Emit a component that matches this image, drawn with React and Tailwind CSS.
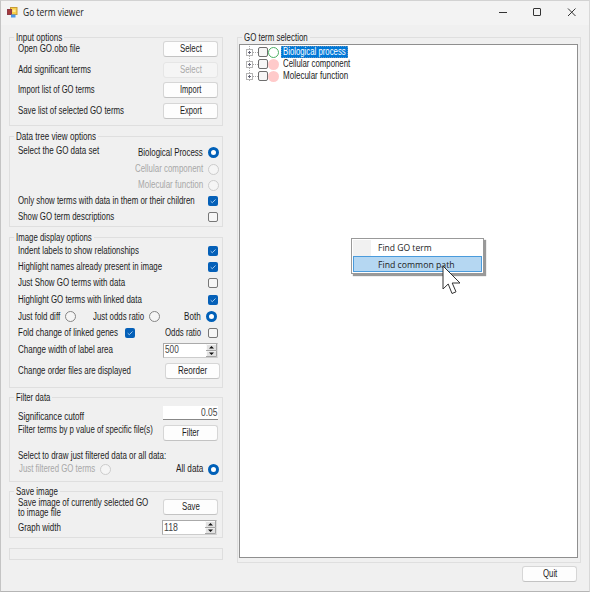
import { useLayoutEffect, useRef } from "react";

// Single-line caption condensed horizontally so that it fills the given width.
function Text({ w, className = "", children }) {
  const box = useRef(null);
  const ink = useRef(null);
  useLayoutEffect(() => {
    box.current.style.width = `${w}px`;
    ink.current.style.transform = `scaleX(${w / ink.current.offsetWidth})`;
  }, [w]);
  return (
    <span ref={box} className={`flex shrink-0 ${className}`}>
      <span ref={ink} className="shrink-0 origin-left whitespace-pre">
        {children}
      </span>
    </span>
  );
}

function Group({ title, w, className, children }) {
  return (
    <section className={`relative flex flex-col border border-[#dfdfdf] ${className}`}>
      <h2 className="absolute -top-[6px] left-[4px] flex h-[11px] items-center bg-[#f0f0f0] px-[2px] leading-none">
        <Text w={w}>{title}</Text>
      </h2>
      {children}
    </section>
  );
}

function Row({ className, children }) {
  return <div className={`flex shrink-0 items-center justify-between pl-[8px] ${className}`}>{children}</div>;
}

function Button({ w, disabled, className = "", children }) {
  return (
    <button
      className={`flex h-[16px] w-[55px] shrink-0 items-center justify-center rounded-[3px] border ${
        disabled ? "border-[#e6e6e6] bg-[#f5f5f5] text-[#a9a9a9]" : "border-[#d6d6d6] border-b-[#c3c3c3] bg-[#fdfdfd]"
      } ${className}`}
    >
      <Text w={w}>{children}</Text>
    </button>
  );
}

function Radio({ checked, disabled }) {
  if (checked) return <i className="size-[11px] shrink-0 rounded-full border-[3px] border-[#0060b8] bg-white" />;
  return (
    <i className={`size-[11px] shrink-0 rounded-full border bg-[#f5f5f5] ${disabled ? "border-[#cccccc]" : "border-[#858585]"}`} />
  );
}

function Check({ checked }) {
  if (!checked) return <i className="size-[10px] shrink-0 rounded-[2px] border border-[#777] bg-[#f6f6f6]" />;
  return (
    <i className="flex size-[10px] shrink-0 items-center justify-center rounded-[2px] bg-[#0560b8]">
      <svg viewBox="0 0 10 10" className="size-[10px]" fill="none" stroke="#b5d5f2" strokeWidth="0.9">
        <path d="M2.7 5.2 4.3 6.7 7.5 3.5" />
      </svg>
    </i>
  );
}

function Spinner({ value }) {
  return (
    <div className="flex h-[15px] w-[55px] shrink-0 border border-[#aaa] border-r-[#ddd] border-b-[#ccc] bg-white">
      <span className="flex flex-1 items-center pl-px text-[#444]">
        <Text w={14}>{value}</Text>
      </span>
      <span className="flex w-[11px] flex-col bg-[#e2e2e2]">
        <svg viewBox="0 0 11 13" className="h-[13px] w-[11px]">
          <path d="M.5 6V.5H10M.5 12.5V7H10" stroke="#fafafa" fill="none" />
          <path d="M0 6.5H10.5V0M0 12.5H10.5V7" stroke="#a5a5a5" fill="none" />
          <path d="M3 4.5 5.5 2 8 4.5ZM3 8.5 5.5 11 8 8.5Z" fill="#111" />
        </svg>
      </span>
    </div>
  );
}

function Node({ selected, w, children }) {
  return (
    <li className="flex h-[12px] items-center">
      <svg viewBox="0 0 12 12" className="h-[12px] w-[12px] shrink-0">
        <path d="M3.5 0V12M7 6.5H12" stroke="#aaa" strokeDasharray="1 1" />
        <rect x=".5" y="3.5" width="6" height="6" fill="#fff" stroke="#b5b5b5" />
        <path d="M2 6.5H5M3.5 5V8" stroke="#667" />
      </svg>
      <i className="size-[10px] shrink-0 rounded-[2px] border border-[#6e6e6e] bg-[#f6f6f6]" />
      <i className={`size-[11px] shrink-0 rounded-full ${selected ? "border border-[#4caf63] bg-white" : "bg-[#ffcaca]"}`} />
      <span
        className={`ml-[2px] flex h-[12px] items-center pl-[2px] ${
          selected ? "w-[67px] bg-[#0078d7] text-white outline-1 -outline-offset-1 outline-dotted outline-[#5f93c0]" : ""
        }`}
      >
        <Text w={w}>{children}</Text>
      </span>
    </li>
  );
}

function TitleBar() {
  return (
    <header className="flex h-[24px] shrink-0 items-center bg-[#f3f3f3]">
      <svg viewBox="0 0 11 11" className="-mt-[2px] ml-[6px] h-[11px] w-[11px]">
        <rect x="3.5" y=".5" width="6.5" height="7" fill="#f8cf4a" stroke="#c79c35" />
        <rect x=".5" y="2.5" width="4" height="5" fill="#a33a3a" stroke="#8e3a48" />
        <rect x="4" y="7.500" width="4.500" height="3" fill="#4b95e6" />
        <path d="M5.500 2.500H8.500V5H5.500Z" fill="#ffe899" />
      </svg>
      <h1 className="-mt-[2px] ml-[5px] flex font-['Open_Sans','Noto_Sans',sans-serif] text-[10px] leading-none text-[#222]">
        <Text w={61}>Go term viewer</Text>
      </h1>
      <svg viewBox="0 0 80 12" className="-mt-[2px] ml-auto mr-[12px] h-[12px] w-[80px]" fill="none" stroke="#333">
        <path d="M2 6.500H10" />
        <rect x="36.500" y="2.500" width="7" height="7" rx=".5" />
        <path d="M71 2.500 78.500 10M78.500 2.500 71 10" />
      </svg>
    </header>
  );
}

export default function App() {
  return (
    <div className="relative flex h-[592px] w-[590px] flex-col overflow-hidden border border-t-[#d2d2d2] border-r-[#d8d8d8] border-b-[#b5b5b5] border-l-[#c4c4c4] bg-[#f0f0f0] font-['Liberation_Sans',Arial,sans-serif] text-[10px] leading-none text-[#1c1c1c]">
      <TitleBar />
      <main className="flex pl-[8px] pt-[12px]">
        <div className="flex w-[214px] flex-col">
          <Group title="Input options" w={46} className="h-[89px] pr-[4px] pt-px">
            <Row className="h-[20px]"><Text w={62}>Open GO.obo file</Text><Button w={22}>Select</Button></Row>
            <Row className="h-[21px]"><Text w={73}>Add significant terms</Text><Button w={22} disabled>Select</Button></Row>
            <Row className="h-[20px]"><Text w={77}>Import list of GO terms</Text><Button w={21}>Import</Button></Row>
            <Row className="h-[21px]"><Text w={106}>Save list of selected GO terms</Text><Button w={22}>Export</Button></Row>
          </Group>

          <Group title="Data tree view options" w={80} className="mt-[10px] h-[91px] pr-[3px] pt-[7px]">
            <Row className="h-[17px]">
              <Text w={81} className="pb-[4px]">Select the GO data set</Text>
              <span className="flex items-center gap-[5px]"><Text w={65}>Biological Process</Text><Radio checked /></span>
            </Row>
            <Row className="h-[16px] justify-end! gap-[5px] text-[#a8a8a8]"><Text w={68}>Cellular component</Text><Radio disabled /></Row>
            <Row className="h-[16px] justify-end! gap-[5px] text-[#a8a8a8]"><Text w={65}>Molecular function</Text><Radio disabled /></Row>
            <Row className="h-[15px] pr-px"><Text w={177}>Only show terms with data in them or their children</Text><Check checked /></Row>
            <Row className="h-[17px] pr-px"><Text w={96}>Show GO term descriptions</Text><Check /></Row>
          </Group>

          <Group title="Image display options" w={76} className="mt-[10px] h-[151px] pr-[4px] pt-[5px]">
            <Row className="h-[16px]"><Text w={121}>Indent labels to show relationships</Text><Check checked /></Row>
            <Row className="h-[16px]"><Text w={144}>Highlight names already present in image</Text><Check checked /></Row>
            <Row className="h-[16px]"><Text w={107}>Just Show GO terms with data</Text><Check /></Row>
            <Row className="h-[17px]"><Text w={124}>Highlight GO terms with linked data</Text><Check checked /></Row>
            <Row className="h-[17px] pr-px">
              <span className="flex items-center gap-[5px]"><Text w={42}>Just fold diff</Text><Radio /></span>
              <span className="flex items-center gap-[5px]"><Text w={51}>Just odds ratio</Text><Radio /></span>
              <span className="ml-[8px] flex items-center gap-[5px]"><Text w={17}>Both</Text><Radio checked /></span>
            </Row>
            <Row className="h-[16px]">
              <span className="flex items-center gap-[7px]"><Text w={100}>Fold change of linked genes</Text><Check checked /></span>
              <span className="flex items-center gap-[7px]"><Text w={36}>Odds ratio</Text><Check /></span>
            </Row>
            <Row className="h-[18px]"><Text w={95}>Change width of label area</Text><Spinner value="500" /></Row>
            <Row className="-mr-[2px] h-[24px]"><Text w={113}>Change order files are displayed</Text><Button w={29}>Reorder</Button></Row>
          </Group>

          <Group title="Filter data" w={34} className="mt-[9px] h-[85px] pr-[4px] pt-[8px]">
            <Row className="h-[14px]">
              <Text w={66} className="pt-[8px]">Significance cutoff</Text>
              <span className="flex h-[14px] w-[55px] items-center justify-end border-b border-[#888] bg-white pr-px text-[#444]"><Text w={16}>0.05</Text></span>
            </Row>
            <Row className="mt-[5px] h-[16px]"><Text w={135} className="pb-[7px]">Filter terms by p value of specific file(s)</Text><Button w={17}>Filter</Button></Row>
            <Row className="mt-[8px] h-[14px]"><Text w={148}>Select to draw just filtered data or all data:</Text></Row>
            <Row className="-mr-px h-[12px]">
              <span className="flex items-center gap-[5px] pl-px text-[#a8a8a8]"><Text w={76}>Just filtered GO terms</Text><Radio disabled /></span>
              <span className="flex items-center gap-[5px]"><Text w={27}>All data</Text><Radio checked /></span>
            </Row>
          </Group>

          <Group title="Save image" w={42} className="mt-[9px] h-[47px] pr-[4px] pt-[6px]">
            <Row className="h-[20px]">
              <span className="flex flex-col items-start"><Text w={130}>Save image of currently selected GO</Text><Text w={43}>to image file</Text></span>
              <Button w={18} className="-mt-[3px]">Save</Button>
            </Row>
            <Row className="mt-[2px] h-[15px] pr-px"><Text w={43}>Graph width</Text><Spinner value="118" /></Row>
          </Group>
          <div className="mt-[10px] h-[12px] border border-[#dedede]" />
        </div>

        <div className="ml-[14px] flex flex-col">
          <Group title="GO term selection" w={64} className="h-[526px] w-[344px] px-px pt-[6px]">
            <ul className="h-[514px] w-[339px] border border-[#8f8f8f] bg-white pl-[6px] pt-px">
              <Node selected w={63}>Biological process</Node>
              <Node w={67}>Cellular component</Node>
              <Node w={65}>Molecular function</Node>
            </ul>
          </Group>
        </div>
      </main>
      <footer className="flex justify-end pr-[12px] pt-[3px]">
        <Button w={14}>Quit</Button>
      </footer>

      <div className="absolute left-[350px] top-[237px] flex h-[36px] w-[133px] flex-col border border-[#999] bg-white p-px font-['Open_Sans','Noto_Sans',sans-serif] text-[9.5px] shadow-[2px_2px_1px_#999]">
        <div className="flex h-[16px] items-center bg-[linear-gradient(90deg,#f1f1f1_18px,#fff_18px)] pl-[25px]"><Text w={54}>Find GO term</Text></div>
        <div className="flex h-[16px] items-center bg-[#b5d7f2] pl-[25px] pt-px outline-1 -outline-offset-1 outline-[#4a9bdc]"><Text w={77}>Find common path</Text></div>
      </div>
      <svg viewBox="0 0 20 30" className="absolute left-[441px] top-[264px] h-[30px] w-[20px]">
        <path d="M1 1V24L6.200 19 10 28.500 14 26.800 10.200 18H18Z" fill="#fff" stroke="#333" strokeWidth="1" />
      </svg>
    </div>
  );
}
